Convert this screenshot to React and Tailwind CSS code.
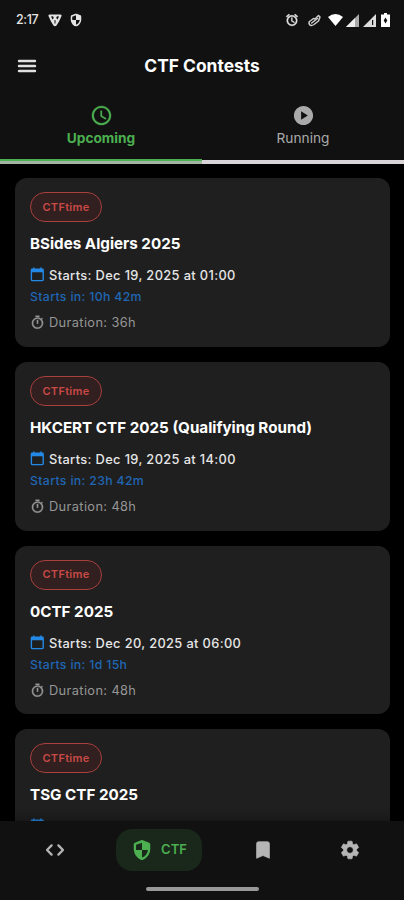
import { MdAccessTime, MdPlayCircle, MdOutlineTimer, MdBookmark, MdSettings, MdAlarm } from "react-icons/md";

const contests = [
  { name: "BSides Algiers 2025", starts: "Dec 19, 2025 at 01:00", left: "10h 42m", duration: "36h" },
  { name: "HKCERT CTF 2025 (Qualifying Round)", starts: "Dec 19, 2025 at 14:00", left: "23h 42m", duration: "48h" },
  { name: "0CTF 2025", starts: "Dec 20, 2025 at 06:00", left: "1d 15h", duration: "48h" },
  { name: "TSG CTF 2025" },
];

function CalendarIcon() {
  return (
    <svg width="15" height="15" viewBox="0 0 15 15" className="-mt-[3px] shrink-0" fill="none">
      <path d="M1.4 5V12.4Q1.4 13.6 2.6 13.6H12Q13.2 13.6 13.2 12.4V5" stroke="#2389e6" strokeWidth="1.4" />
      <path d="M.7 5.2V3Q.7 1.6 2.1 1.6H3V.4H4.5V1.6H10.1V.4H11.6V1.6H12.5Q13.9 1.6 13.9 3V5.2Z" fill="#2389e6" />
    </svg>
  );
}

function ShieldIcon({ className }) {
  return (
    <svg viewBox="0 0 24 24" className={className}>
      <path
        fill="currentColor"
        fillRule="evenodd"
        d="M11 1.4Q12 1 13 1.4L19.8 4Q21 4.5 21 5.8V11C21 16.5 17.3 21.3 12.6 22.8Q12 23 11.4 22.8C6.7 21.3 3 16.5 3 11V5.8Q3 4.5 4.2 4ZM12 4L5.5 6.4V12H12ZM12 12V20.3C15.5 19 18 15.8 18.5 12Z"
      />
    </svg>
  );
}

function ContestCard({ contest }) {
  return (
    <article className="h-[168.8px] shrink-0 rounded-xl bg-[#1f1f1f] px-[15px] pt-[14px] whitespace-nowrap">
      <div className="flex h-[30px] w-[72px] items-center justify-center rounded-full border-[1.5px] border-[#a8403d] bg-[#321f1f] text-[11px] font-semibold tracking-[0.3px] text-[#c94a47]">
        CTFtime
      </div>
      <h2 className="mt-[10px] h-6 text-[15.2px] leading-6 font-bold text-white">{contest.name}</h2>
      <div className="mt-[11px] flex h-[18px] items-center gap-1 text-[12.8px] font-medium tracking-[0.38px] text-[#e6e6e6]">
        <CalendarIcon />
        {contest.starts && <span>Starts: {contest.starts}</span>}
      </div>
      {contest.left && (
        <p className="mt-[3px] h-[18px] text-[12.3px] leading-[18px] font-medium tracking-[0.33px] text-[#1f66b4]">Starts in: {contest.left}</p>
      )}
      {contest.duration && (
        <div className="mt-[8px] flex h-[18px] items-center gap-1 text-[12.8px] tracking-[0.38px] text-[#969696]">
          <MdOutlineTimer className="-mt-px size-[15px] shrink-0 [&>path:not([fill=none])]:stroke-[0.5px]" />
          <span>Duration: {contest.duration}</span>
        </div>
      )}
    </article>
  );
}

function StatusBar() {
  return (
    <div className="flex h-10 items-center justify-between pr-[14px] pl-4 text-[#e4e4e4]">
      <div className="flex items-center">
        <span className="w-[32px] text-[12.5px] font-medium tracking-[-0.4px]">2:17</span>
        <svg width="14" height="13" viewBox="0 0 14 13" fill="currentColor" fillRule="evenodd">
          <path d="M1.5 .5H12.5Q14 .5 13.5 2L11 7.5L8.5 11.5Q7 13 5.5 11.5L3 7.5L.5 2Q0 .5 1.5 .5ZM3 2.5L4.5 5.5L5.8 4L5 2.3ZM11 2.5L9.5 5.5L8.2 4L9 2.3ZM6.5 6V9.5H7.5V6Z" />
        </svg>
        <ShieldIcon className="ml-[7px] size-[14px]" />
      </div>
      <div className="flex items-center">
        <MdAlarm className="size-[14px] [&>path:not([fill=none])]:stroke-[0.8px]" />
        <svg width="13" height="13" viewBox="0 0 13 13" className="mr-[7px] ml-[9px]" fill="none" stroke="#cccccc" strokeWidth="1.5" strokeLinecap="round" strokeLinejoin="round">
          <path d="M1.5 7.5L5.5 4.5L7 5L10.5 1.5L12 3L10.5 7L6 10.5Q3 12.5 1.5 10.5Q.5 9 1.5 7.5Z" />
          <path d="M3.7 9L9.5 4.5" />
        </svg>
        <svg width="15" height="12" viewBox="0 0 15 12" fill="white"><path d="M0 3Q7.5 -3 15 3L7.5 12Z" /></svg>
        <svg width="13" height="13" viewBox="0 0 13 13" className="ml-[3px]"><path d="M0 13L13 0V13Z" fill="#aaa" /><path d="M0 13L9 4V13Z" fill="#eee" /></svg>
        <svg width="13" height="13" viewBox="0 0 13 13" className="ml-[4px]"><path d="M0 13L13 0V13Z" fill="#ddd" /><path d="M9 6H10.2V11H9Z" fill="#111" /></svg>
        <svg width="9" height="14" viewBox="0 0 9 14" className="ml-[5px]"><path d="M3 0H6V1.5H9V14H0V1.5H3Z" fill="white" /><path d="M4.5 4.5L6.3 7.5L4.5 10.5L2.7 7.5Z" fill="#111" /></svg>
      </div>
    </div>
  );
}

export default function App() {
  return (
    <div className="flex h-[900px] w-[404px] flex-col overflow-hidden bg-black font-['Inter',sans-serif]">
      <header className="h-[159px] shrink-0 bg-[#111111]">
        <StatusBar />
        <div className="grid h-[52px] grid-cols-[40px_1fr_40px] items-center px-[15px]">
          <svg width="24" height="24" viewBox="0 0 24 24" fill="none" stroke="#e0e0e0" strokeWidth="2.4" strokeLinecap="round">
            <path d="M4 7H20M4 12H20M4 17H20" />
          </svg>
          <h1 className="text-center text-[17.4px] font-bold text-white">CTF Contests</h1>
        </div>
        <nav className="grid grid-cols-2 pt-[12px] text-[13.7px] leading-[20px]">
          <div className="flex flex-col items-center gap-px text-[#4caf50]">
            <MdAccessTime className="size-[23px] [&>path:not([fill=none])]:stroke-[0.3px]" />
            <span className="font-bold">Upcoming</span>
          </div>
          <div className="flex flex-col items-center gap-px text-[#aaaaaa]">
            <MdPlayCircle className="size-[23px]" />
            <span>Running</span>
          </div>
        </nav>
      </header>
      <div className="grid h-[4.5px] shrink-0 grid-cols-2">
        <div className="border-t-2 border-[#4caf50] bg-[#a2b5a2]" />
        <div className="border-t border-[#111111] bg-[#d8d4d8]" />
      </div>
      <main className="flex min-h-0 flex-1 flex-col gap-[15px] overflow-hidden pt-[14.5px] pr-[14px] pl-[15px]">
        {contests.map((c) => <ContestCard key={c.name} contest={c} />)}
      </main>
      <footer className="relative h-[79px] shrink-0 bg-[#111111] pt-[8px] shadow-[0_-2px_10px_rgba(0,0,0,0.35)]">
        <nav className="flex h-[42px] items-center text-[#b5b5b5]">
          <svg className="ml-[44px] size-[22px]" viewBox="0 0 24 24" fill="none" stroke="currentColor" strokeWidth="2.5" strokeLinecap="round" strokeLinejoin="round">
            <path d="M8.3 7L3.3 12L8.3 17M15.7 7L20.7 12L15.7 17" />
          </svg>
          <div className="ml-[50px] flex h-[42px] w-[86px] items-center justify-center gap-2 rounded-2xl bg-[#19281a] text-[13px] font-semibold text-[#4caf50]">
            <ShieldIcon className="size-[22px]" />
            CTF
          </div>
          <MdBookmark className="ml-[50px] size-[22px] [stroke-linejoin:round] [&>path:not([fill=none])]:stroke-[0.8px]" />
          <MdSettings className="ml-[65px] size-[22px] [stroke-linejoin:round] [&>path:not([fill=none])]:stroke-[0.7px]" />
        </nav>
        <div className="mx-auto mt-[16px] h-1 w-[113px] rounded-full bg-[#999999]" />
      </footer>
    </div>
  );
}
